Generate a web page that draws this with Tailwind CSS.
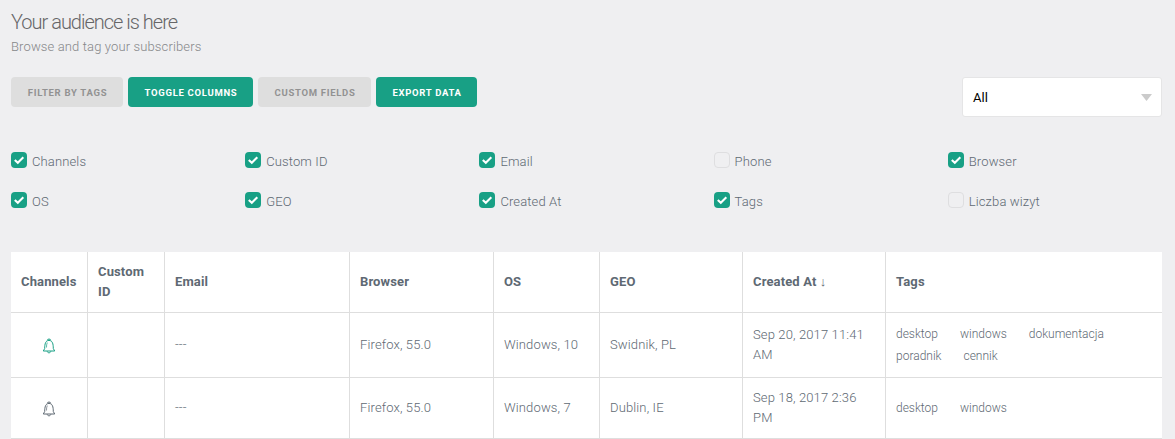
<!DOCTYPE html>
<html lang="en">
<head>
<meta charset="utf-8">
<title>Audience</title>
<script src="https://cdn.jsdelivr.net/npm/@tailwindcss/browser@4"></script>
</head>
<body class="h-[439px] overflow-hidden bg-[#efeff1] pl-[11px] pr-[13px] font-['Roboto',sans-serif] text-[13px] leading-5 font-light tracking-[0.13px] text-[#5e6973]">
<svg class="hidden">
  <symbol id="check" viewBox="0 0 16 16"><path d="M3.8 7.900 6.8 10.700 12.300 5.300" fill="none" stroke="#fff" stroke-width="2.100"/></symbol>
  <symbol id="bell" viewBox="0 0 14 16"><path d="M5.200 2.100C5.500.7 8.500.7 8.800 2.100M2.700 10.500C2.700 6 3.500 2.400 7 2.400s4.300 3.600 4.300 8.100L12.700 13H1.300ZM5.200 13.300c.3 2 3.300 2 3.600 0" fill="none" stroke="currentColor" stroke-width="1"/><path d="M5.300 4.600C4.600 6 4.500 7.500 4.500 9.500" fill="none" stroke="currentColor" stroke-width="0.700"/></symbol>
</svg>
<header class="pt-[9px]">
  <h1 class="h-[26px] text-[20px] leading-[26px] tracking-[-1px] text-[#666668]">Your audience is here</h1>
  <p class="mt-[2px] h-5 text-[#868789]">Browse and tag your subscribers</p>
</header>
<div class="mt-5 flex h-10 items-start justify-between">
  <div class="flex gap-[5px] text-[9.500px] font-bold tracking-[0.7px] text-white">
    <button class="h-[30px] w-[112px] rounded-[4px] bg-[#dedede] pt-[2px] pl-px text-[#929292]">FILTER BY TAGS</button>
    <button class="h-[30px] w-[125px] rounded-[4px] bg-[#18a085] pt-[2px] pl-px">TOGGLE COLUMNS</button>
    <button class="h-[30px] w-[113px] rounded-[4px] bg-[#dedede] pt-[2px] pl-px text-[#929292]">CUSTOM FIELDS</button>
    <button class="h-[30px] w-[101px] rounded-[4px] bg-[#18a085] pt-[2px] pl-px">EXPORT DATA</button>
  </div>
  <div class="flex h-10 w-[200px] items-center justify-between rounded-[3px] border border-[#e5e5e6] bg-white pr-[9px] pl-[10px] font-normal tracking-normal text-black">
    <span class="pt-[2px]">All</span>
    <svg class="h-[7px] w-[11px]" viewBox="0 0 11 7"><path d="M0 0h11L5.500 7z" fill="#cbcbcb"/></svg>
  </div>
</div>
<div class="mt-[34px] grid h-[101px] grid-cols-[repeat(5,234.2px)] content-start gap-y-5">
  <label class="flex h-5 gap-[5px]"><span class="mt-[1px] size-4 rounded-[4px] bg-[#18a085]"><svg class="size-4"><use href="#check"/></svg></span><span class="translate-y-px">Channels</span></label>
  <label class="flex h-5 gap-[5px]"><span class="mt-[1px] size-4 rounded-[4px] bg-[#18a085]"><svg class="size-4"><use href="#check"/></svg></span><span class="translate-y-px">Custom ID</span></label>
  <label class="flex h-5 gap-[5px]"><span class="mt-[1px] size-4 rounded-[4px] bg-[#18a085]"><svg class="size-4"><use href="#check"/></svg></span><span class="translate-y-px">Email</span></label>
  <label class="flex h-5 gap-[5px]"><span class="mt-[1px] size-4 rounded-[4px] border border-[#dedee0]"></span><span class="translate-y-px">Phone</span></label>
  <label class="flex h-5 gap-[5px]"><span class="mt-[1px] size-4 rounded-[4px] bg-[#18a085]"><svg class="size-4"><use href="#check"/></svg></span><span class="translate-y-px">Browser</span></label>
  <label class="flex h-5 gap-[5px]"><span class="mt-[1px] size-4 rounded-[4px] bg-[#18a085]"><svg class="size-4"><use href="#check"/></svg></span><span class="translate-y-px">OS</span></label>
  <label class="flex h-5 gap-[5px]"><span class="mt-[1px] size-4 rounded-[4px] bg-[#18a085]"><svg class="size-4"><use href="#check"/></svg></span><span class="translate-y-px">GEO</span></label>
  <label class="flex h-5 gap-[5px]"><span class="mt-[1px] size-4 rounded-[4px] bg-[#18a085]"><svg class="size-4"><use href="#check"/></svg></span><span class="translate-y-px">Created At</span></label>
  <label class="flex h-5 gap-[5px]"><span class="mt-[1px] size-4 rounded-[4px] bg-[#18a085]"><svg class="size-4"><use href="#check"/></svg></span><span class="translate-y-px">Tags</span></label>
  <label class="flex h-5 gap-[5px]"><span class="mt-[1px] size-4 rounded-[4px] border border-[#dedee0]"></span><span class="translate-y-px">Liczba wizyt</span></label>
</div>
<table class="w-[1151px] table-fixed border-separate border-spacing-0 bg-white text-left [&_td]:border-r [&_td]:border-b [&_td]:border-[#dedede] [&_td]:px-[10px] [&_td]:py-0 [&_th]:border-r [&_th]:border-b [&_th]:border-[#dedede] [&_th]:px-[10px] [&_th]:py-0 [&_tr>*:last-child]:border-r-0">
  <colgroup><col class="w-[77px]"><col class="w-[77px]"><col class="w-[185px]"><col class="w-[144px]"><col class="w-[106px]"><col class="w-[143px]"><col class="w-[143px]"><col class="w-[276px]"></colgroup>
  <thead>
    <tr class="h-[61px] font-bold"><th class="whitespace-nowrap">Channels</th><th>Custom ID</th><th>Email</th><th>Browser</th><th>OS</th><th>GEO</th><th>Created At ↓</th><th>Tags</th></tr>
  </thead>
  <tbody>
    <tr class="h-[65px]">
      <td><svg class="mx-auto mt-[2px] h-4 w-[14px] text-[#18a085]"><use href="#bell"/></svg></td><td></td><td>---</td><td>Firefox, 55.0</td><td>Windows, 10</td><td>Swidnik, PL</td><td>Sep 20, 2017 11:41 AM</td>
      <td><div class="flex flex-wrap gap-x-[22px] text-[12px] leading-[22px] tracking-normal"><span>desktop</span><span>windows</span><span>dokumentacja</span><span>poradnik</span><span>cennik</span></div></td>
    </tr>
    <tr class="h-[61px]">
      <td><svg class="mx-auto mt-[2px] h-4 w-[14px] text-[#5e6973]"><use href="#bell"/></svg></td><td></td><td>---</td><td>Firefox, 55.0</td><td>Windows, 7</td><td>Dublin, IE</td><td>Sep 18, 2017 2:36 PM</td>
      <td><div class="flex flex-wrap gap-x-[22px] text-[12px] leading-[22px] tracking-normal"><span>desktop</span><span>windows</span></div></td>
    </tr>
  </tbody>
</table>
</body>
</html>
